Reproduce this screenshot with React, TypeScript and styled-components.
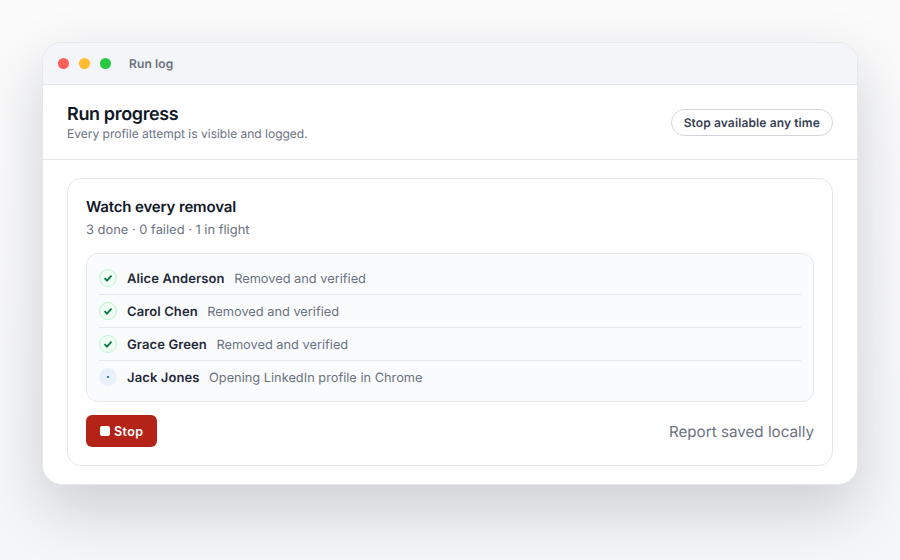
import styled, { createGlobalStyle } from "styled-components";

const rows = [
  { name: "Alice Anderson", detail: "Removed and verified", done: true },
  { name: "Carol Chen", detail: "Removed and verified", done: true },
  { name: "Grace Green", detail: "Removed and verified", done: true },
  { name: "Jack Jones", detail: "Opening LinkedIn profile in Chrome", done: false },
];

export default function App() {
  return (
    <Stage>
      <GlobalStyle />
      <Window>
        <TitleBar>
          <Light $color="#ff5f57" />
          <Light $color="#febc2e" />
          <Light $color="#28c840" />
          <WindowTitle>Run log</WindowTitle>
        </TitleBar>
        <Header>
          <HeaderText>
            <Heading>Run progress</Heading>
            <Subheading>Every profile attempt is visible and logged.</Subheading>
          </HeaderText>
          <Pill>Stop available any time</Pill>
        </Header>
        <Content>
          <Card>
            <CardTitle>Watch every removal</CardTitle>
            <CardMeta>3 done · 0 failed · 1 in flight</CardMeta>
            <List>
              {rows.map((row) => (
                <Row key={row.name}>
                  <Badge $done={row.done}>
                    {row.done ? (
                      <svg width="12" height="12" viewBox="0 0 12 12" fill="none">
                        <path
                          d="M2.5 6.2 5 8.7 9.5 3.6"
                          stroke="#067647"
                          strokeWidth="1.8"
                        />
                      </svg>
                    ) : (
                      <Dot />
                    )}
                  </Badge>
                  <Name>{row.name}</Name>
                  <Detail>{row.detail}</Detail>
                </Row>
              ))}
            </List>
            <Footer>
              <StopButton type="button">
                <StopIcon />
                Stop
              </StopButton>
              <Saved>Report saved locally</Saved>
            </Footer>
          </Card>
        </Content>
      </Window>
    </Stage>
  );
}

const GlobalStyle = createGlobalStyle`
  html, body {
    margin: 0;
    padding: 0;
  }

  body {
    font-family: Inter, "Liberation Sans", sans-serif;
    text-rendering: geometricPrecision;
    background: #fff;
  }
`;

const Stage = styled.div`
  box-sizing: border-box;
  width: 900px;
  height: 560px;
  padding: 42px;
  overflow: hidden;
  background: linear-gradient(180deg, #fbfbfc 0%, #f5f6f8 100%);
`;

const Window = styled.div`
  width: 816px;
  height: 443px;
  box-sizing: border-box;
  overflow: hidden;
  background: #fff;
  border: 1px solid #e5e7eb;
  border-radius: 20px;
  box-shadow: 0 24px 60px rgba(17, 24, 39, 0.18);
`;

const TitleBar = styled.div`
  display: flex;
  align-items: center;
  gap: 10px;
  height: 41px;
  padding: 0 15px;
  background: #f3f5f9;
  border-bottom: 1px solid #e5e7eb;
`;

const Light = styled.span<{ $color: string }>`
  width: 11px;
  height: 11px;
  border-radius: 50%;
  background: ${({ $color }) => $color};
`;

const WindowTitle = styled.span`
  margin-left: 8px;
  font-size: 12px;
  font-weight: 600;
  letter-spacing: 0.01em;
  color: #6b7280;
`;

const Header = styled.div`
  display: flex;
  align-items: center;
  justify-content: space-between;
  height: 74px;
  padding: 0 24px;
  border-bottom: 1px solid #e5e7eb;
`;

const HeaderText = styled.div`
  padding-top: 2px;
`;

const Heading = styled.div`
  font-size: 18px;
  line-height: 22px;
  font-weight: 600;
  letter-spacing: -0.02em;
  color: #111827;
`;

const Subheading = styled.div`
  font-size: 12px;
  line-height: 16px;
  color: #6b7280;
`;

const Pill = styled.div`
  display: flex;
  align-items: center;
  height: 25px;
  padding: 0 12px;
  font-size: 12px;
  font-weight: 600;
  letter-spacing: 0.01em;
  color: #374151;
  border: 1px solid #d1d5db;
  border-radius: 999px;
`;

const Content = styled.div`
  padding: 18px 24px;
`;

const Card = styled.div`
  box-sizing: border-box;
  height: 288px;
  padding: 18px;
  border: 1px solid #e5e7eb;
  border-radius: 14px;
`;

const CardTitle = styled.div`
  font-size: 15px;
  line-height: 20px;
  font-weight: 600;
  letter-spacing: -0.01em;
  color: #111827;
`;

const CardMeta = styled.div`
  margin-top: 4px;
  font-size: 12.9px;
  line-height: 20px;
  color: #6b7280;
`;

const List = styled.div`
  margin-top: 12px;
  padding: 8px 12px;
  background: #fafbfd;
  border: 1px solid #e5e7eb;
  border-radius: 12px;
`;

const Row = styled.div`
  display: flex;
  align-items: center;
  height: 32px;
  border-bottom: 1px solid #e5e7eb;

  &:last-child {
    border-bottom: none;
  }
`;

const Badge = styled.span<{ $done: boolean }>`
  display: flex;
  align-items: center;
  justify-content: center;
  box-sizing: border-box;
  width: 18px;
  height: 18px;
  margin-right: 10px;
  border-radius: 50%;
  background: ${({ $done }) => ($done ? "#f0fdf4" : "#eaf1fb")};
  border: 1px solid ${({ $done }) => ($done ? "#bbf7d0" : "#eaf1fb")};
`;

const Dot = styled.span`
  width: 2px;
  height: 2px;
  background: #2e78d6;
`;

const Name = styled.span`
  margin-right: 9.5px;
  padding-top: 2px;
  font-size: 13px;
  font-weight: 600;
  letter-spacing: 0.008em;
  color: #1f2937;
`;

const Detail = styled.span`
  padding-top: 2px;
  font-size: 12.8px;
  color: #6b7280;
`;

const Footer = styled.div`
  display: flex;
  align-items: center;
  justify-content: space-between;
  margin-top: 13px;
`;

const StopButton = styled.button`
  display: flex;
  align-items: center;
  gap: 4px;
  height: 32px;
  padding: 0 14px;
  font-family: inherit;
  font-size: 12.5px;
  font-weight: 600;
  letter-spacing: 0.03em;
  color: #fff;
  background: #b42318;
  border: none;
  border-radius: 6px;
`;

const StopIcon = styled.span`
  width: 10px;
  height: 10px;
  background: #fff;
  border-radius: 2px;
`;

const Saved = styled.span`
  font-size: 15.2px;
  color: #6b7280;
`;
